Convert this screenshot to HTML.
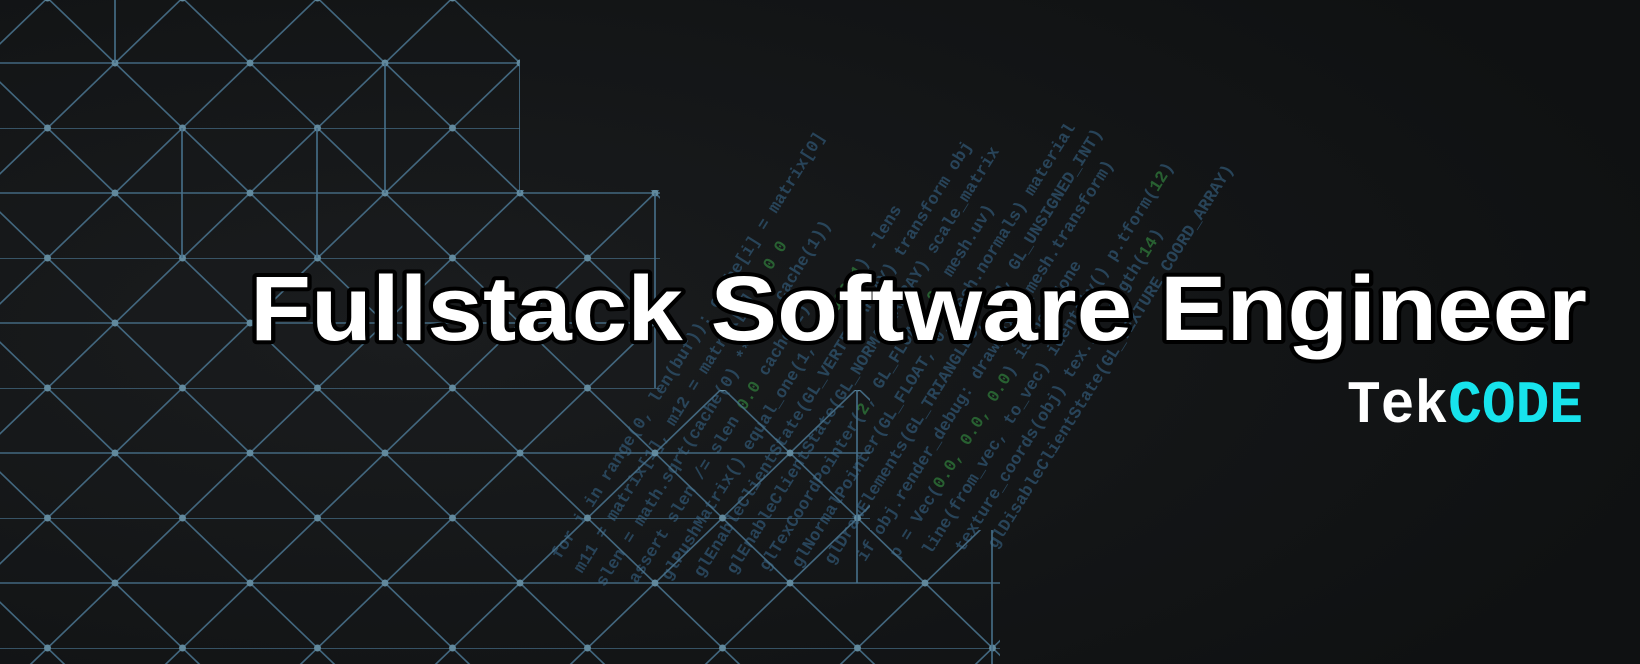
<!DOCTYPE html>
<html><head><meta charset="utf-8"><style>
html,body{margin:0;padding:0;background:#111314;width:1640px;height:664px;overflow:hidden;}
svg{display:block}
</style></head><body>
<svg width="1640" height="664" viewBox="0 0 1640 664" xmlns="http://www.w3.org/2000/svg">
<defs>
<radialGradient id="bg" cx="0.25" cy="0.5" r="0.8">
<stop offset="0" stop-color="#1a1c1e"/><stop offset="1" stop-color="#0f1112"/>
</radialGradient>
<pattern id="tri" x="47.5" y="-2" width="135" height="130" patternUnits="userSpaceOnUse">
<g stroke="#47708a" stroke-width="1.6" fill="none">
<line x1="0" y1="0" x2="135" y2="0"/>
<line x1="0" y1="65" x2="135" y2="65"/>
<polyline points="0,0 67.5,65 0,130"/>
<polyline points="135,0 67.5,65 135,130"/>
</g>
<g fill="#6a96ac"><circle cx="0" cy="0" r="3.5"/><circle cx="135" cy="0" r="3.5"/><circle cx="67.5" cy="65" r="3.5"/><circle cx="0" cy="130" r="3.5"/><circle cx="135" cy="130" r="3.5"/></g>
</pattern>
<clipPath id="gclip"><polygon points="0,0 520,0 520,190 660,190 660,390 870,390 870,530 1000,530 1000,664 0,664"/></clipPath>
</defs>
<rect width="1640" height="664" fill="url(#bg)"/>
<g transform="translate(560,560) rotate(-58)" font-family="Liberation Mono, monospace" font-size="17" font-weight="bold" fill="#2f5470" opacity="0.75">
<text x="0" y="0">for i in range(0, len(buf)): cache[i] = matrix[0]</text>
<text x="0" y="26">m11 = matrix[1], m12 = matrix[2] <tspan fill="#2f7a3a">0 0 0</tspan></text>
<text x="0" y="52">slen = math.sqrt(cache(0) ** 2 + cache(1))</text>
<text x="20" y="78">assert slen /= slen <tspan fill="#2f7a3a">0.0</tspan> cache(2)</text>
<text x="40" y="104">glPushMatrix() equal_one(1, <tspan fill="#2f7a3a">0.000001</tspan>) -lens</text>
<text x="60" y="130">glEnableClientState(GL_VERTEX_ARRAY) transform obj</text>
<text x="80" y="156">glEnableClientState(GL_NORMAL_ARRAY) scale_matrix</text>
<text x="100" y="182">glTexCoordPointer(<tspan fill="#2f7a3a">2</tspan>, GL_FLOAT, <tspan fill="#2f7a3a">0</tspan>, mesh.uv)</text>
<text x="120" y="208">glNormalPointer(GL_FLOAT, 0, mesh.normals) material</text>
<text x="140" y="234">glDrawElements(GL_TRIANGLES, len, GL_UNSIGNED_INT)</text>
<text x="160" y="260">if obj.render_debug: draw_axes(mesh.transform)</text>
<text x="180" y="286">p = Vec(<tspan fill="#2f7a3a">0.0, 0.0, 0.0</tspan>) is not None</text>
<text x="200" y="312">line(from_vec, to_vec) identity() p.tform(<tspan fill="#2f7a3a">12</tspan>)</text>
<text x="220" y="338">texture_coords(obj) tex.id length(<tspan fill="#2f7a3a">14</tspan>)</text>
<text x="240" y="364">glDisableClientState(GL_TEXTURE_COORD_ARRAY)</text>
</g>
<g clip-path="url(#gclip)">
<rect width="1640" height="664" fill="url(#tri)" opacity="0.9"/>
<g stroke="#47708a" stroke-width="1.6">
<line x1="115" y1="0" x2="115" y2="63"/>
<line x1="182" y1="128" x2="182" y2="258"/>
<line x1="317" y1="128" x2="317" y2="258"/>
<line x1="385" y1="63" x2="385" y2="193"/>
<line x1="520" y1="63" x2="520" y2="193"/>
<line x1="655" y1="193" x2="655" y2="388"/>
<line x1="857" y1="388" x2="857" y2="583"/>
<line x1="992" y1="518" x2="992" y2="664"/>
</g>
</g>
<text x="250" y="340" textLength="1337" lengthAdjust="spacingAndGlyphs" font-family="Liberation Sans, sans-serif" font-weight="bold" font-size="92" fill="#ffffff" stroke="#000" stroke-width="8" paint-order="stroke" stroke-linejoin="round">Fullstack Software Engineer</text>
<text x="1347" y="422" textLength="236" lengthAdjust="spacingAndGlyphs" font-family="Liberation Mono, monospace" font-size="60" font-weight="bold"><tspan fill="#ffffff">Tek</tspan><tspan fill="#17e3ec">CODE</tspan></text>
</svg>
</body></html>
